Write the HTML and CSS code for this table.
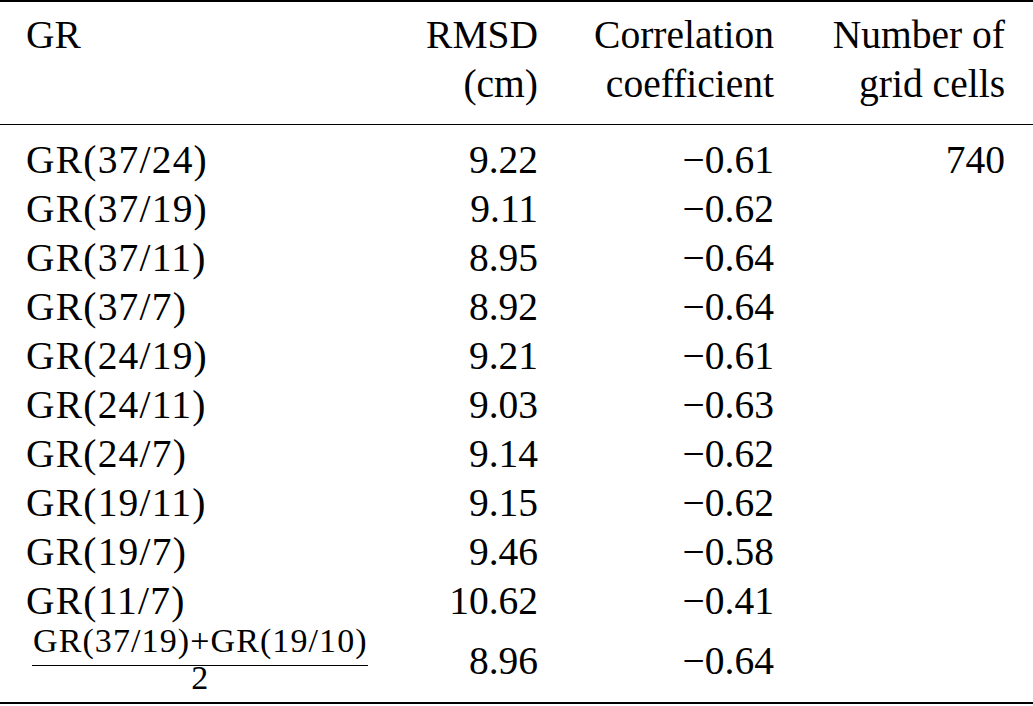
FILE: index.html
```html
<!DOCTYPE html>
<html lang="en">
<head>
<meta charset="utf-8">
<title>GR table</title>
<link rel="stylesheet" href="styles.css">
</head>
<body>
<table class="tbl">
  <colgroup>
    <col class="c1"><col class="c2"><col class="c3"><col class="c4">
  </colgroup>
  <thead>
    <tr>
      <th class="l">GR<br>&nbsp;</th>
      <th class="r">RMSD<br>(cm)</th>
      <th class="r">Correlation<br>coefficient</th>
      <th class="r last">Number of<br>grid cells</th>
    </tr>
  </thead>
  <tbody>
    <tr class="first"><td class="l lab">GR(37/24)</td><td class="r">9.22</td><td class="r">−0.61</td><td class="r last">740</td></tr>
    <tr><td class="l lab">GR(37/19)</td><td class="r">9.11</td><td class="r">−0.62</td><td class="r last"></td></tr>
    <tr><td class="l lab">GR(37/11)</td><td class="r">8.95</td><td class="r">−0.64</td><td class="r last"></td></tr>
    <tr><td class="l lab">GR(37/7)</td><td class="r">8.92</td><td class="r">−0.64</td><td class="r last"></td></tr>
    <tr><td class="l lab">GR(24/19)</td><td class="r">9.21</td><td class="r">−0.61</td><td class="r last"></td></tr>
    <tr><td class="l lab">GR(24/11)</td><td class="r">9.03</td><td class="r">−0.63</td><td class="r last"></td></tr>
    <tr><td class="l lab">GR(24/7)</td><td class="r">9.14</td><td class="r">−0.62</td><td class="r last"></td></tr>
    <tr><td class="l lab">GR(19/11)</td><td class="r">9.15</td><td class="r">−0.62</td><td class="r last"></td></tr>
    <tr><td class="l lab">GR(19/7)</td><td class="r">9.46</td><td class="r">−0.58</td><td class="r last"></td></tr>
    <tr><td class="l lab">GR(11/7)</td><td class="r">10.62</td><td class="r">−0.41</td><td class="r last"></td></tr>
    <tr class="fracrow">
      <td class="l"><span class="frac"><span class="num">GR(37/19)+GR(19/10)</span><span class="den">2</span></span></td>
      <td class="r">8.96</td><td class="r">−0.64</td><td class="r last"></td>
    </tr>
  </tbody>
</table>
</body>
</html>
```

FILE: styles.css
```css
html, body {
  margin: 0;
  padding: 0;
  background: #ffffff;
}

body {
  font-family: "Liberation Serif", "Tinos", "Times New Roman", Times, "DejaVu Serif", serif;
  color: #000000;
}

.tbl {
  width: 1033px;
  table-layout: fixed;
  border-collapse: separate;
  border-spacing: 0;
  border-top: 2.5px solid #000;
  font-family: "Liberation Serif", "Tinos", "Times New Roman", Times, "DejaVu Serif", serif;
  font-size: 39.5px;
}

.c1 { width: 420px; }
.c2 { width: 118px; }
.c3 { width: 236px; }
.c4 { width: 259px; }

th, td {
  padding: 0;
  font-weight: normal;
  vertical-align: baseline;
  white-space: nowrap;
}

.l { text-align: left; padding-left: 26px; }
.r { text-align: right; }
.last { padding-right: 28px; }

.lab { letter-spacing: 1.2px; }

thead th {
  line-height: 49px;
  padding-top: 8.7px;
  padding-bottom: 15.8px;
  border-bottom: 1.5px solid #000;
}

tbody td {
  line-height: 49px;
}

tbody tr.first td {
  padding-top: 10.7px;
}

.fracrow td {
  padding-bottom: 12.3px;
  border-bottom: 2px solid #000;
}

.frac {
  display: inline-flex;
  flex-direction: column;
  align-items: center;
  vertical-align: 22px;
  margin-left: 6px;
  font-size: 34px;
}

.num {
  line-height: 30px;
  padding: 0 0 8.5px 1px;
  letter-spacing: 1.1px;
  border-bottom: 1.5px solid #000;
}

.den {
  line-height: 24px;
}
```
